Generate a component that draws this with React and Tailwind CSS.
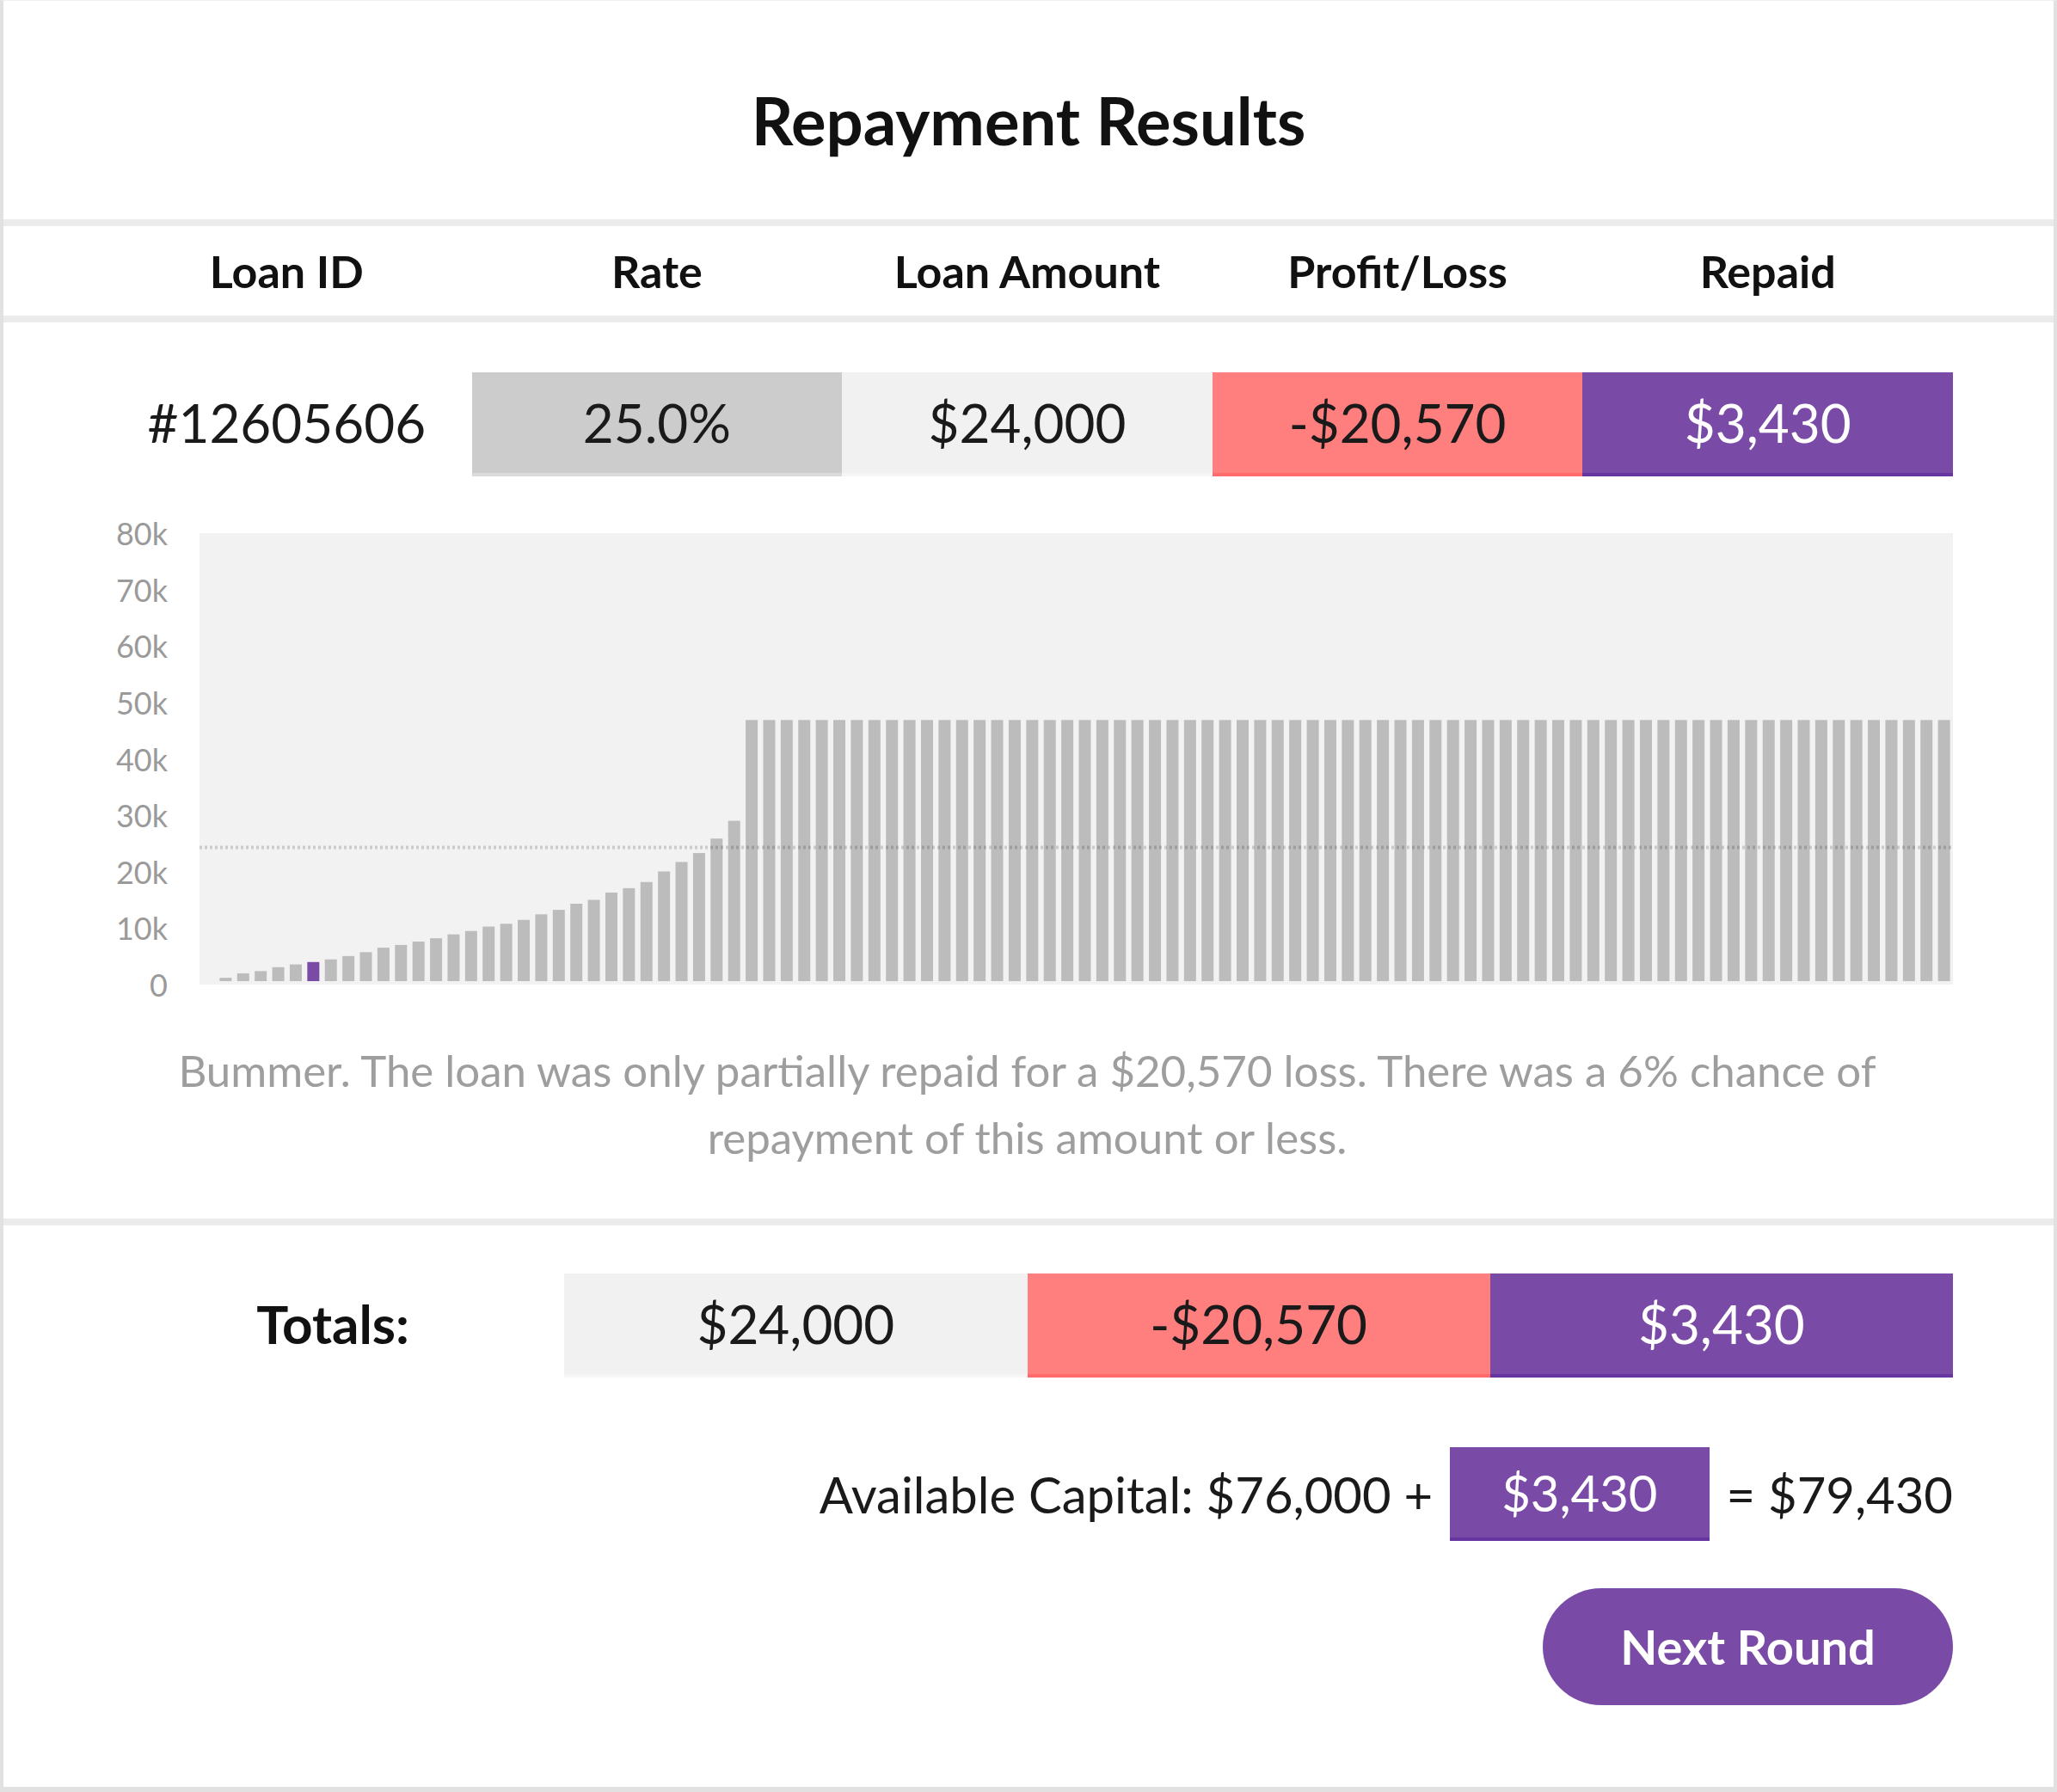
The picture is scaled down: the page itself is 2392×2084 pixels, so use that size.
const bars = [
  0, 600, 1400, 1800, 2500, 3000, 3430, 3900, 4500, 5200, 6000, 6500, 7100, 7700, 8400, 9000, 9800,
  10300, 11000, 12000, 12800, 13900, 14600, 15900, 16700, 17800, 19700, 21400, 23000, 25600, 28800,
]
while (bars.length < 100) bars.push(46900)

const PLOT_W = 2039
const PLOT_H = 525
const BASE = 521
const PX_PER = 518 / 80000
const PITCH = PLOT_W / 100

function Cell({ className, children }) {
  return (
    <div className={`h-[121px] flex items-center justify-center text-[62px] border-b-4 ${className}`}>
      {children}
    </div>
  )
}

function Chart() {
  const labels = ['80k', '70k', '60k', '50k', '40k', '30k', '20k', '10k', '0']
  return (
    <div className="flex mt-[66px]">
      <div className="w-[114px] h-[525px] pr-[37px] flex flex-col justify-between items-end text-[36px] text-[#9a9a9a]">
        {labels.map((l) => (
          <div key={l} className="h-0 flex items-center">
            {l}
          </div>
        ))}
      </div>
      <div className="flex-1 h-[525px] bg-[#f2f2f2]">
        <svg width={PLOT_W} height={PLOT_H} viewBox={`0 0 ${PLOT_W} ${PLOT_H}`}>
          {bars.map((v, i) => {
            const h = v * PX_PER
            return (
              <rect
                key={i}
                x={i * PITCH + 3}
                y={BASE - h}
                width={14}
                height={h}
                fill={i === 6 ? '#7a4ba6' : '#bcbcbc'}
              />
            )
          })}
          <line
            x1={0}
            x2={PLOT_W}
            y1={BASE - 24000 * PX_PER}
            y2={BASE - 24000 * PX_PER}
            stroke="#000"
            strokeOpacity="0.16"
            strokeWidth="4"
            strokeDasharray="3 3"
          />
        </svg>
      </div>
    </div>
  )
}

export default function App() {
  return (
    <div className="bg-white" style={{ fontFamily: 'Lato, "Open Sans", sans-serif' }}>
      <div className="w-[2392px] h-[2084px] border-x-4 border-b-[6px] border-t border-[#e1e1e1] border-t-[#f0f0f0] bg-white flex flex-col text-[#1a1a1a]">
        <div className="h-[254px] pt-6 flex items-center justify-center">
          <h1 className="text-[76px] font-bold text-[#111]">Repayment Results</h1>
        </div>
        <div className="h-2 bg-[#ebebeb]" />

        <div className="h-[104px] grid grid-cols-5 pl-[114px] pr-[117px] items-center text-center text-[52px] font-bold text-[#111]">
          <div>Loan ID</div>
          <div>Rate</div>
          <div>Loan Amount</div>
          <div>Profit/Loss</div>
          <div>Repaid</div>
        </div>
        <div className="h-2 bg-[#ebebeb]" />

        <div className="pl-[114px] pr-[117px] pt-[58px]">
          <div className="grid grid-cols-5">
            <Cell className="border-transparent text-[#1a1a1a]">#12605606</Cell>
            <Cell className="bg-[#cccccc] border-[#dadada] text-[#1a1a1a]">25.0%</Cell>
            <Cell className="bg-[#f1f1f1] border-[#f6f6f6] text-[#1a1a1a]">$24,000</Cell>
            <Cell className="bg-[#ff7f7f] border-[#ff6a6a] text-[#1a1a1a]">-$20,570</Cell>
            <Cell className="bg-[#7a4ba6] border-[#6536a0] text-white">$3,430</Cell>
          </div>

          <Chart />

          <p className="mt-[61px] mx-auto max-w-[2060px] text-center text-[51px] leading-[78px] text-[#9e9e9e]">
            Bummer. The loan was only partially repaid for a $20,570 loss. There was a 6% chance of repayment of
            this amount or less.
          </p>
        </div>

        <div className="h-2 bg-[#ebebeb] mt-[55px]" />

        <div className="pl-[114px] pr-[117px] pt-[56px]">
          <div className="grid grid-cols-4">
            <Cell className="border-transparent font-bold text-[#111]">Totals:</Cell>
            <Cell className="bg-[#f1f1f1] border-[#f6f6f6] text-[#1a1a1a]">$24,000</Cell>
            <Cell className="bg-[#ff7f7f] border-[#ff6a6a] text-[#1a1a1a]">-$20,570</Cell>
            <Cell className="bg-[#7a4ba6] border-[#6536a0] text-white">$3,430</Cell>
          </div>

          <div className="mt-[81px] flex items-center justify-end gap-5 text-[58px] text-[#1a1a1a]">
            <span>Available Capital: $76,000 +</span>
            <span className="h-[109px] px-[60px] flex items-center bg-[#7a4ba6] border-b-4 border-[#6536a0] text-white">
              $3,430
            </span>
            <span>= $79,430</span>
          </div>

          <div className="mt-[55px] flex justify-end">
            <button className="w-[477px] h-[136px] rounded-full bg-[#7a4ba6] text-white text-[56px] font-bold">
              Next Round
            </button>
          </div>
        </div>
      </div>
    </div>
  )
}
